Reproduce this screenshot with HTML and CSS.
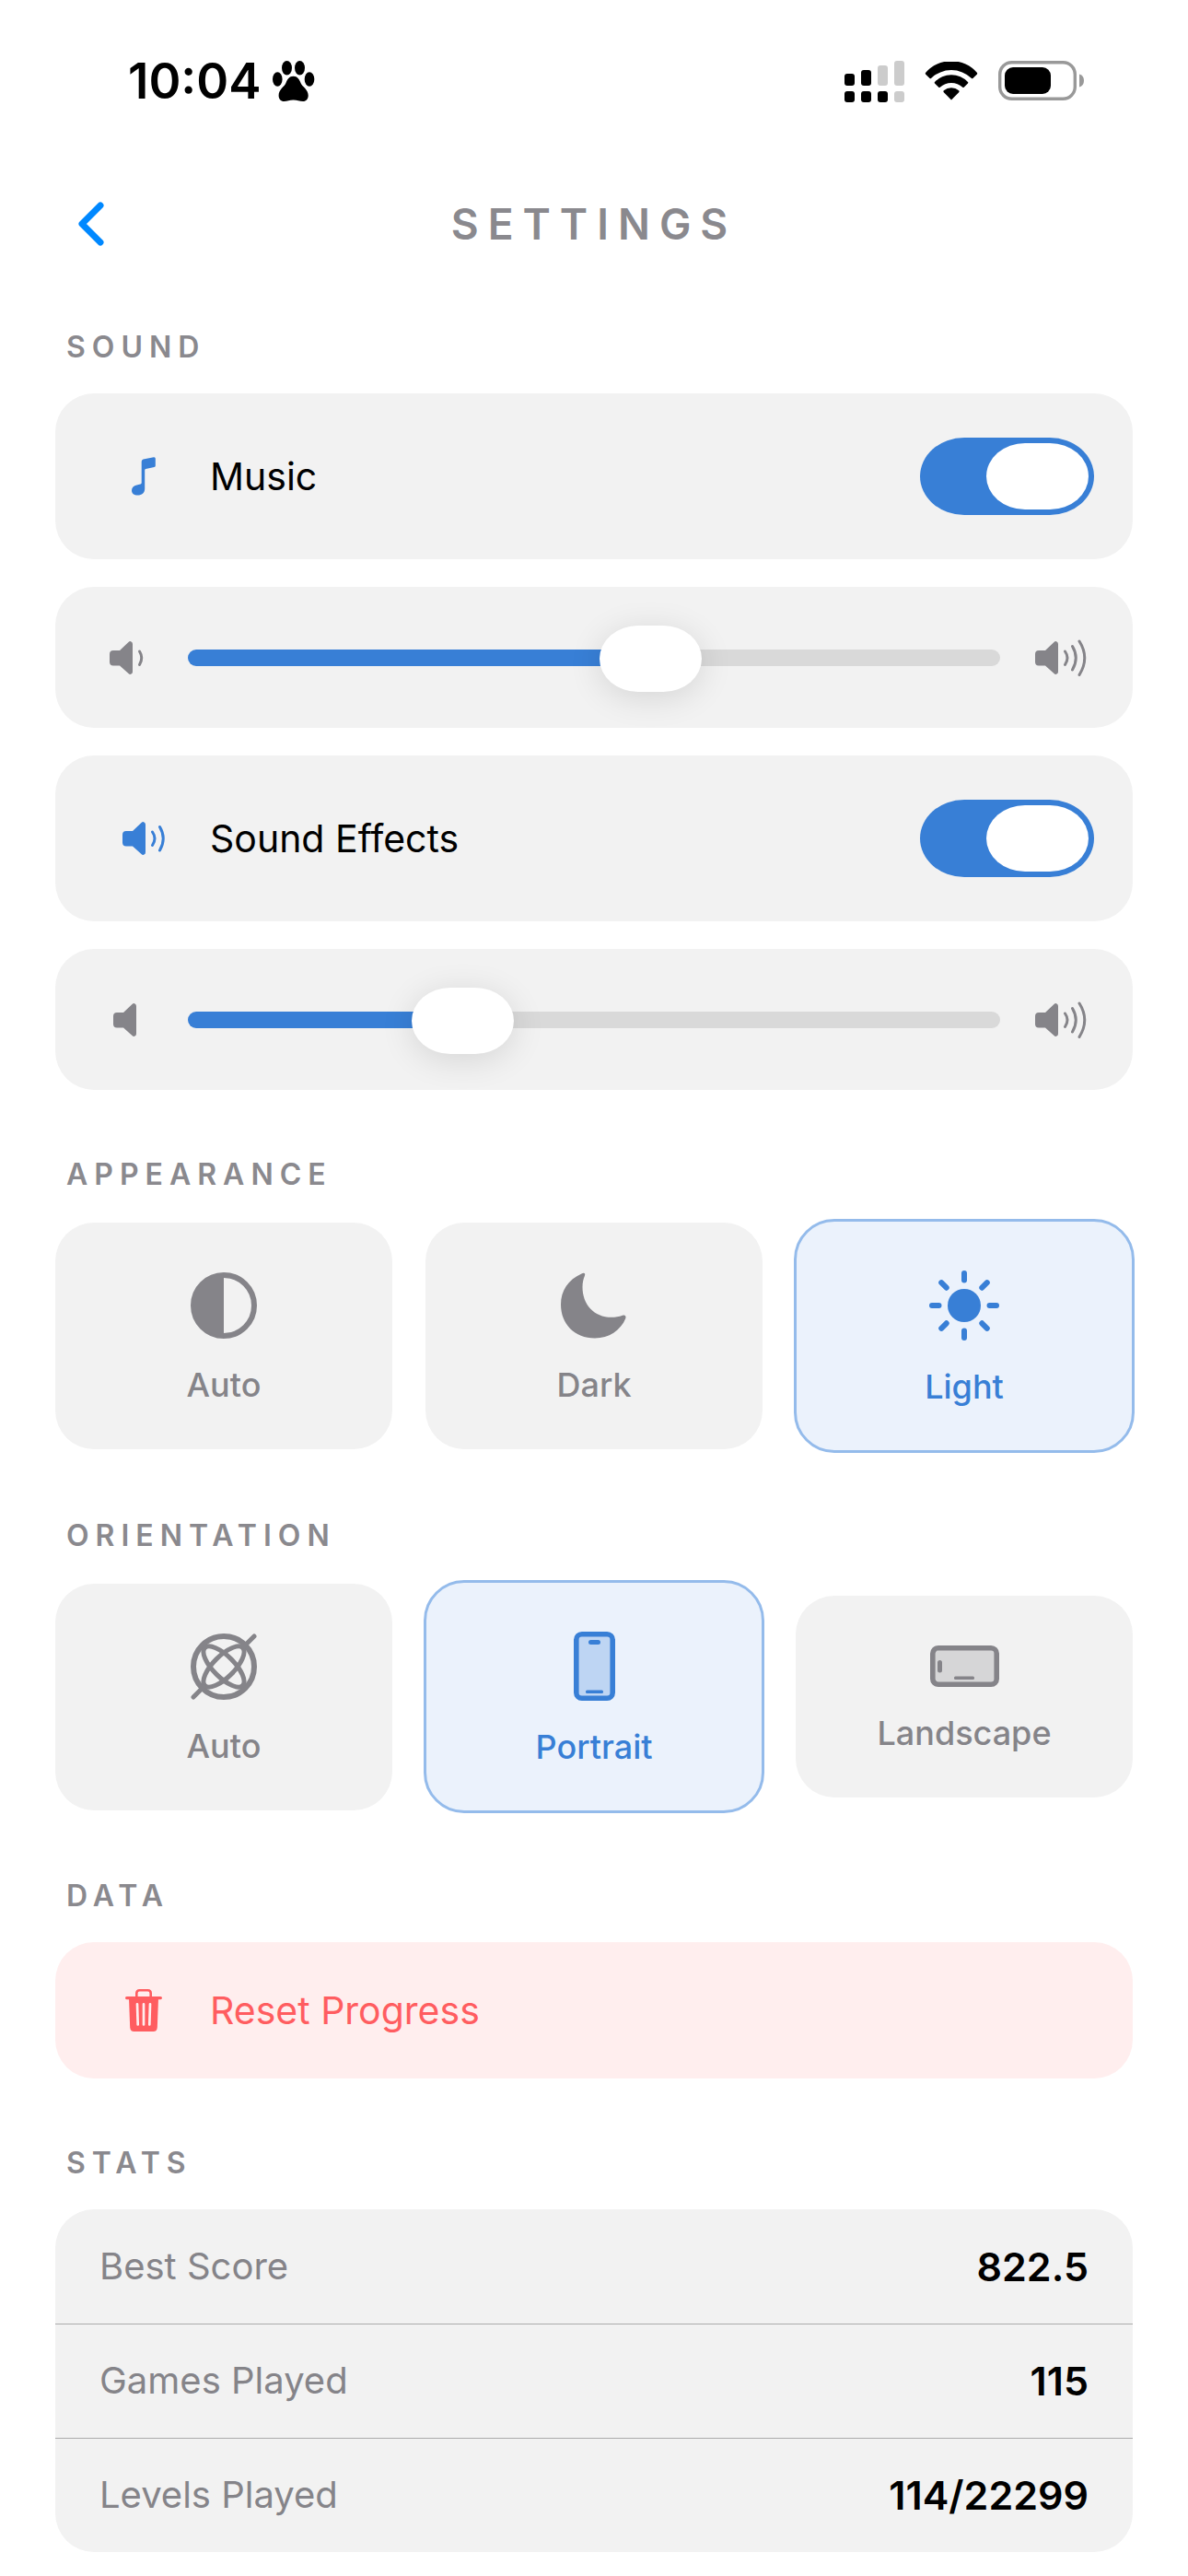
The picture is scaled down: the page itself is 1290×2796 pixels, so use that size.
FILE: index.html
```html
<!DOCTYPE html>
<html lang="en">
<head>
    <meta charset="UTF-8">
    <meta name="viewport" content="width=device-width, initial-scale=1.0">
    <title>Settings</title>
    <link rel="stylesheet" href="styles.css">
</head>
<body>
    <!-- Shared speaker shapes -->
    <svg class="sprite" aria-hidden="true">
        <symbol id="speaker" viewBox="0 0 25 36">
            <path d="M4 10H11L20.500 1Q22 -.4 23.500 .4Q25 1 25 3V33Q25 35 23.500 35.600Q22 36.400 20.500 35L11 26.500H4Q0 26.500 0 22.500V14Q0 10 4 10Z" fill="currentColor"/>
        </symbol>
    </svg>

    <div class="status-bar">
        <div class="status-left">
            <span class="time">10:04</span>
            <svg width="46" height="44" viewBox="0 0 46 44" fill="currentColor" aria-hidden="true">
                <ellipse cx="15.500" cy="7.700" rx="5.500" ry="7.700"/>
                <ellipse cx="29.500" cy="7.700" rx="5.500" ry="7.700"/>
                <ellipse cx="5.300" cy="20" rx="5.300" ry="7.700"/>
                <ellipse cx="40" cy="20" rx="5.300" ry="7.700"/>
                <path d="M22.500 16.700C27 16.700 29 20 30.500 24C32 28 38.700 31 38.700 37.500C38.700 41.500 36.500 44 33 44C29 44 27 42.500 22.500 42.500C18 42.500 16 44 12.500 44C8.800 44 6.600 41.500 6.600 37.500C6.600 31 13 28 14.500 24C16 20 18 16.700 22.500 16.700Z"/>
            </svg>
        </div>
        <div class="status-right">
            <svg width="65" height="45" viewBox="0 0 65 45" aria-hidden="true">
                <g fill="#000">
                    <rect x="0" y="14" width="11" height="13" rx="3"/>
                    <rect x="18" y="10" width="11" height="17" rx="3"/>
                    <rect x="0" y="33" width="11" height="12" rx="3"/>
                    <rect x="18" y="33" width="11" height="12" rx="3"/>
                    <rect x="36" y="33" width="11" height="12" rx="3"/>
                </g>
                <g fill="#ccc">
                    <rect x="36" y="5" width="11" height="22" rx="3"/>
                    <rect x="54" y="0" width="11" height="27" rx="3"/>
                    <rect x="54" y="33" width="11" height="12" rx="3"/>
                </g>
            </svg>
            <svg width="58" height="42" viewBox="0 0 58 42" fill="#000" aria-hidden="true">
                <path d="M1 12Q.5 13 1.200 13.800L5.600 18Q6.300 18.500 7 17.900A31.900 31.900 0 0 1 51 17.900Q51.700 18.500 52.400 18L56.800 13.800Q57.500 13 57 12A37 37 0 0 0 1 12Z"/>
                <path d="M11 22Q10.300 22.800 11 23.500L15.300 27.700Q16 28.300 16.700 27.700A18.500 18.500 0 0 1 41.300 27.700Q42 28.300 42.700 27.700L47 23.500Q47.700 22.800 47 22A24.600 24.600 0 0 0 11 22Z"/>
                <path d="M29 41.500L20.600 33Q20 32 20.800 31.300A12.500 12.500 0 0 1 37.200 31.300Q38 32 37.400 33Z"/>
            </svg>
            <svg width="94" height="44" viewBox="0 0 94 44" aria-hidden="true">
                <rect x="1.700" y="1.700" width="81.600" height="39.600" rx="13" fill="none" stroke="#999" stroke-width="3.400"/>
                <rect x="7" y="7" width="50" height="29" rx="9" fill="#000"/>
                <path d="M88 14.500Q93 16 93 21.500T88 28.500Z" fill="#999"/>
            </svg>
        </div>
    </div>

    <header class="nav">
        <button type="button" class="back" aria-label="Back">
            <svg width="28" height="48" viewBox="0 0 28 48" aria-hidden="true">
                <path d="M24 4L4 24L24 44" fill="none" stroke="currentColor" stroke-width="7" stroke-linecap="round" stroke-linejoin="round"/>
            </svg>
        </button>
        <h1>SETTINGS</h1>
    </header>

    <main class="settings">
        <section>
            <h2>SOUND</h2>
            <div class="stack">
                <label class="card row">
                    <span class="row-icon">
                        <svg width="26" height="42" viewBox="0 0 26 42" aria-hidden="true">
                            <path d="M12.500 2.500L24 .2Q25.800 0 25.800 1.800V9.500Q25.800 10.800 24.500 11.100L15.200 13Q14.200 13.200 14.200 14.200V34.500C14.200 39 11 41.500 6.500 41.500C2.500 41.500 0 39.500 0 36.200C0 33 2.200 31 5.500 30.400L9.500 29.600Q10.700 29.300 10.700 28V5Q10.700 3 12.500 2.500Z" fill="currentColor"/>
                        </svg>
                    </span>
                    <span class="row-text">Music</span>
                    <input type="checkbox" class="toggle" role="switch" checked>
                </label>
                <div class="card slider">
                    <span class="slider-icon">
                        <svg width="39" height="36" viewBox="0 0 39 36" aria-hidden="true">
                            <use href="#speaker" width="25" height="36"/>
                            <path d="M32.500 11Q37 18 32.500 25.500" class="wave"/>
                        </svg>
                    </span>
                    <input type="range" min="0" max="1000" value="580" style="--fill: 58%" aria-label="Music volume">
                    <span class="slider-icon">
                        <svg width="56" height="40" viewBox="0 -2 56 40" aria-hidden="true">
                            <use href="#speaker" width="25" height="36"/>
                            <path d="M32.500 11Q37.500 18 32.500 25.500M40.500 5.500Q48 18 40.500 31M48 0Q59.500 18 48 36.500" class="wave"/>
                        </svg>
                    </span>
                </div>
                <label class="card row">
                    <span class="row-icon">
                        <svg width="47" height="36" viewBox="0 0 47 36" aria-hidden="true">
                            <use href="#speaker" width="25" height="36"/>
                            <path d="M32.500 11Q37.500 18 32.500 25.500M40.500 5.500Q48 18 40.500 31" class="wave"/>
                        </svg>
                    </span>
                    <span class="row-text">Sound Effects</span>
                    <input type="checkbox" class="toggle" role="switch" checked>
                </label>
                <div class="card slider">
                    <span class="slider-icon">
                        <svg width="30" height="36" viewBox="0 0 30 36" aria-hidden="true">
                            <use href="#speaker" width="25" height="36"/>
                        </svg>
                    </span>
                    <input type="range" min="0" max="1000" value="315" style="--fill: 31.5%" aria-label="Sound effects volume">
                    <span class="slider-icon">
                        <svg width="56" height="40" viewBox="0 -2 56 40" aria-hidden="true">
                            <use href="#speaker" width="25" height="36"/>
                            <path d="M32.500 11Q37.500 18 32.500 25.500M40.500 5.500Q48 18 40.500 31M48 0Q59.500 18 48 36.500" class="wave"/>
                        </svg>
                    </span>
                </div>
            </div>
        </section>

        <section>
            <h2>APPEARANCE</h2>
            <div class="tiles">
                <button type="button" class="tile" aria-pressed="false">
                    <svg width="72" height="72" viewBox="0 0 72 72" aria-hidden="true">
                        <circle cx="36" cy="36" r="33" fill="none" stroke="currentColor" stroke-width="6"/>
                        <path d="M36 3A33 33 0 0 0 36 69Z" fill="currentColor"/>
                    </svg>
                    <span>Auto</span>
                </button>
                <button type="button" class="tile" aria-pressed="false">
                    <svg width="72" height="72" viewBox="0 0 72 72" aria-hidden="true">
                        <path d="M22.500 1.500C8 8 0 20 0 35C0 56 15 71.500 37 71.500C52 71.500 65 63 70.300 50C71.200 47.500 69.500 46 67 46.800C63 48.200 59 48.800 55 48.800C36 48.800 23.500 35 23.500 16C23.500 11 24.500 7 26 3.500C27 1 25 0 22.500 1.500Z" fill="currentColor"/>
                    </svg>
                    <span>Dark</span>
                </button>
                <button type="button" class="tile selected" aria-pressed="true">
                    <svg width="76" height="76" viewBox="0 0 76 76" aria-hidden="true">
                        <circle cx="38" cy="38" r="18" fill="currentColor"/>
                        <path d="M38 3V10.500M38 65.500V73M3 38H10.500M65.500 38H73M13.200 13.200L18.700 18.700M57.300 57.300L62.800 62.800M13.200 62.800L18.700 57.300M57.300 18.700L62.800 13.200" fill="none" stroke="currentColor" stroke-width="6" stroke-linecap="round"/>
                    </svg>
                    <span>Light</span>
                </button>
            </div>
        </section>

        <section>
            <h2>ORIENTATION</h2>
            <div class="tiles">
                <button type="button" class="tile" aria-pressed="false">
                    <svg width="72" height="72" viewBox="0 0 72 72" fill="none" stroke="currentColor" stroke-width="5" aria-hidden="true">
                        <circle cx="36" cy="36" r="33" stroke-width="6"/>
                        <ellipse cx="36" cy="36" rx="29" ry="11.500" transform="rotate(45 36 36)"/>
                        <ellipse cx="36" cy="36" rx="29" ry="11.500" transform="rotate(-45 36 36)"/>
                        <path d="M58 14L69 3M14 58L3 69" stroke-linecap="round"/>
                    </svg>
                    <span>Auto</span>
                </button>
                <button type="button" class="tile selected" aria-pressed="true">
                    <svg width="45" height="75" viewBox="0 0 45 75" aria-hidden="true">
                        <rect x="5" y="5" width="35" height="65" rx="4" fill="currentColor" opacity=".25"/>
                        <rect x="2.800" y="2.800" width="39.400" height="69.400" rx="6" fill="none" stroke="currentColor" stroke-width="5.600"/>
                        <rect x="16" y="9" width="13" height="5" rx="2.500" fill="currentColor"/>
                        <rect x="13" y="63.500" width="19" height="3.500" rx="1.500" fill="currentColor"/>
                    </svg>
                    <span>Portrait</span>
                </button>
                <button type="button" class="tile" aria-pressed="false">
                    <svg width="75" height="45" viewBox="0 0 75 45" aria-hidden="true">
                        <rect x="5" y="5" width="65" height="35" rx="4" fill="currentColor" opacity=".25"/>
                        <rect x="2.800" y="2.800" width="69.400" height="39.400" rx="6" fill="none" stroke="currentColor" stroke-width="5.600"/>
                        <rect x="8" y="16" width="5" height="13.500" rx="2.500" fill="currentColor"/>
                        <rect x="26" y="33.500" width="22" height="3.500" rx="1.500" fill="currentColor"/>
                    </svg>
                    <span>Landscape</span>
                </button>
            </div>
        </section>

        <section>
            <h2>DATA</h2>
            <button type="button" class="card row danger">
                <span class="row-icon">
                    <svg width="40" height="46" viewBox="0 0 40 46" aria-hidden="true">
                        <path d="M12.300 9V4.500Q12.300 1.300 15.500 1.300H24.500Q27.700 1.300 27.700 4.500V9" fill="none" stroke="currentColor" stroke-width="2.600"/>
                        <rect x="0" y="8" width="40" height="3.200" rx="1.600" fill="currentColor"/>
                        <path d="M4 10H36L34.800 41.500Q34.500 46 30.500 46H9.500Q5.500 46 5.200 41.500Z" fill="currentColor"/>
                        <path d="M13 16.300L13.700 38.500M20 16.300V38.500M27 16.300L26.300 38.500" fill="none" stroke="#ffeeee" stroke-width="2.700" stroke-linecap="round"/>
                    </svg>
                </span>
                <span class="row-text">Reset Progress</span>
            </button>
        </section>

        <section>
            <h2>STATS</h2>
            <div class="card">
                <table class="stats">
                    <tr>
                        <th scope="row">Best Score</th>
                        <td>822.5</td>
                    </tr>
                    <tr>
                        <th scope="row">Games Played</th>
                        <td>115</td>
                    </tr>
                    <tr>
                        <th scope="row">Levels Played</th>
                        <td>114/22299</td>
                    </tr>
                </table>
            </div>
        </section>
    </main>
</body>
</html>
```
FILE: styles.css
```css
:root {
    --blue: #387fd6;
    --gray: #858489;
    --card: #f2f2f2;
}
* {
    box-sizing: border-box;
}
body {
    margin: 0;
    background-color: #fff;
    color: #000;
    font-family: Inter, "Liberation Sans", sans-serif;
    font-size: 41px;
    line-height: 52px;
}
svg {
    display: block;
    flex: none;
}
button {
    border: none;
    font: inherit;
    cursor: pointer;
}
.sprite {
    position: absolute;
    width: 0;
    height: 0;
}

/* Status bar */
.status-bar {
    display: flex;
    justify-content: space-between;
    align-items: center;
    height: 176px;
    padding: 0 112px 0 139px;
}
.status-left {
    display: flex;
    align-items: center;
    gap: 12px;
}
.time {
    font-size: 53px;
    font-weight: 600;
}
.status-right {
    display: flex;
    align-items: center;
    gap: 22px;
}

/* Title bar */
.nav {
    display: grid;
    grid-template-columns: 1fr auto 1fr;
    align-items: center;
    height: 134px;
    padding: 0 60px;
}
.back {
    display: flex;
    justify-content: center;
    align-items: center;
    width: 78px;
    height: 78px;
    padding: 0;
    background: none;
    color: #0088ff;
}
h1 {
    margin: 0;
    color: #8a898e;
    font-size: 46px;
    font-weight: 600;
    letter-spacing: 10px;
}

.settings {
    display: flex;
    flex-direction: column;
    gap: 70px;
    padding: 45px 60px 24px;
}
h2 {
    margin: 0 0 28px;
    padding-left: 12px;
    color: #8a898e;
    font-size: 32px;
    font-weight: 600;
    line-height: 44px;
    letter-spacing: 7px;
}
.stack {
    display: flex;
    flex-direction: column;
    gap: 30px;
}
.card {
    background-color: var(--card);
    border-radius: 42px;
    overflow: hidden;
}

/* Rows with an icon and a label */
.row {
    display: flex;
    align-items: center;
    gap: 18px;
    width: 100%;
    padding: 48px 42px;
    text-align: left;
}
.row-icon {
    display: flex;
    justify-content: center;
    width: 108px;
    color: var(--blue);
}
.row-text {
    flex: 1;
}
.danger,
.danger .row-icon {
    color: #ff5d60;
}
.danger {
    background-color: #ffeeee;
}
.wave {
    fill: none;
    stroke: currentColor;
    stroke-width: 3;
    stroke-linecap: round;
}

.toggle {
    appearance: none;
    display: flex;
    width: 189px;
    height: 84px;
    margin: 0;
    padding: 6px;
    border-radius: 48px / 42px;
    background-color: #d9d9d9;
}
.toggle::before {
    content: "";
    width: 111px;
    height: 72px;
    border-radius: 42px / 36px;
    background-color: #fff;
}
.toggle:checked {
    justify-content: flex-end;
    background-color: var(--blue);
}

/* Volume sliders */
.slider {
    display: flex;
    align-items: center;
    gap: 30px;
    padding: 48px 42px;
}
.slider-icon {
    display: flex;
    justify-content: center;
    width: 72px;
    color: var(--gray);
}
input[type="range"] {
    appearance: none;
    flex: 1;
    min-width: 0;
    height: 57px;
    margin: 0;
    background: none;
}
input[type="range"]::-webkit-slider-runnable-track {
    height: 18px;
    border-radius: 9px;
    background: linear-gradient(to right, var(--blue) var(--fill), #d9d9d9 var(--fill));
}
input[type="range"]::-webkit-slider-thumb {
    appearance: none;
    width: 111px;
    height: 72px;
    margin-top: -26px;
    border-radius: 42px / 36px;
    background-color: #fff;
    box-shadow: 0 6px 36px rgba(0, 0, 0, 0.12);
}

/* Option tiles */
.tiles {
    display: grid;
    grid-template-columns: repeat(3, 1fr);
    align-items: center;
    gap: 36px;
}
.tile {
    display: flex;
    flex-direction: column;
    align-items: center;
    gap: 29px;
    padding: 54px 10px 49px;
    border-radius: 42px;
    background-color: var(--card);
    color: var(--gray);
    font-size: 36px;
    font-weight: 500;
    line-height: 42px;
}
.tile.selected {
    background-color: #ebf2fc;
    color: var(--blue);
    outline: 3px solid #94bbeb;
    outline-offset: -1px;
}

/* Stats */
.stats {
    width: 100%;
    border-collapse: collapse;
}
.stats tr + tr {
    border-top: 1px solid #ababab;
}
.stats th,
.stats td {
    height: 124px;
    padding: 0 48px;
}
.stats th {
    color: var(--gray);
    font-size: 40px;
    font-weight: 400;
    text-align: left;
}
.stats td {
    font-size: 43px;
    font-weight: 600;
    text-align: right;
}
```
